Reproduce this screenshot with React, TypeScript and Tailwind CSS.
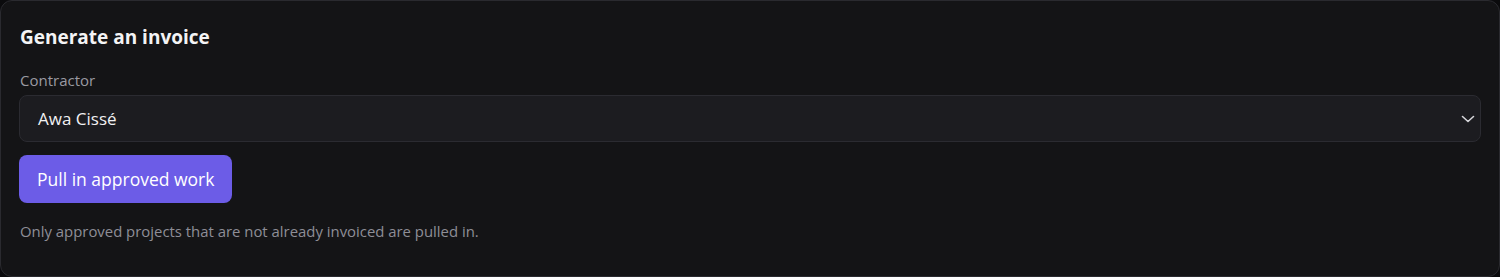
import React from 'react';

const App: React.FC = () => {
  return (
    <main className="bg-[#0b0b0d] w-[1500px] h-[277px]" style={{ fontFamily: '"Open Sans", "Noto Sans", sans-serif' }}>
      <section className="h-[277px] rounded-xl border border-[#2a2a2f] bg-[#141416] px-[18px] pt-[22px] flex flex-col items-start">
        <h2 className="text-[19px] leading-[28px] font-bold text-[#f4f4f5] ml-px">Generate an invoice</h2>

        <label className="mt-[18px] text-[15px] leading-[22px] text-[#9a9aa2] ml-px">Contractor</label>

        <div className="mt-[4px] w-full h-[47px] rounded-lg border border-[#2b2b31] bg-[#1c1c20] flex items-center justify-between pl-[18px] pr-[5px]">
          <span className="text-[17px] text-[#f1f1f3]">Awa Cissé</span>
          <svg width="14" height="14" viewBox="0 0 14 14" fill="none" stroke="#d6d6da" strokeWidth="1.6" strokeLinecap="round" strokeLinejoin="round">
            <path d="M1.5 4.5 L7 9.5 L12.5 4.5" />
          </svg>
        </div>

        <button className="mt-[13px] h-[48px] px-[18px] rounded-lg bg-[#6c5ce7] text-[17.5px] text-white">Pull in approved work</button>

        <p className="mt-[17px] text-[14.9px] leading-[22px] text-[#8e8e96] ml-px">Only approved projects that are not already invoiced are pulled in.</p>
      </section>
    </main>
  );
};

export default App;
